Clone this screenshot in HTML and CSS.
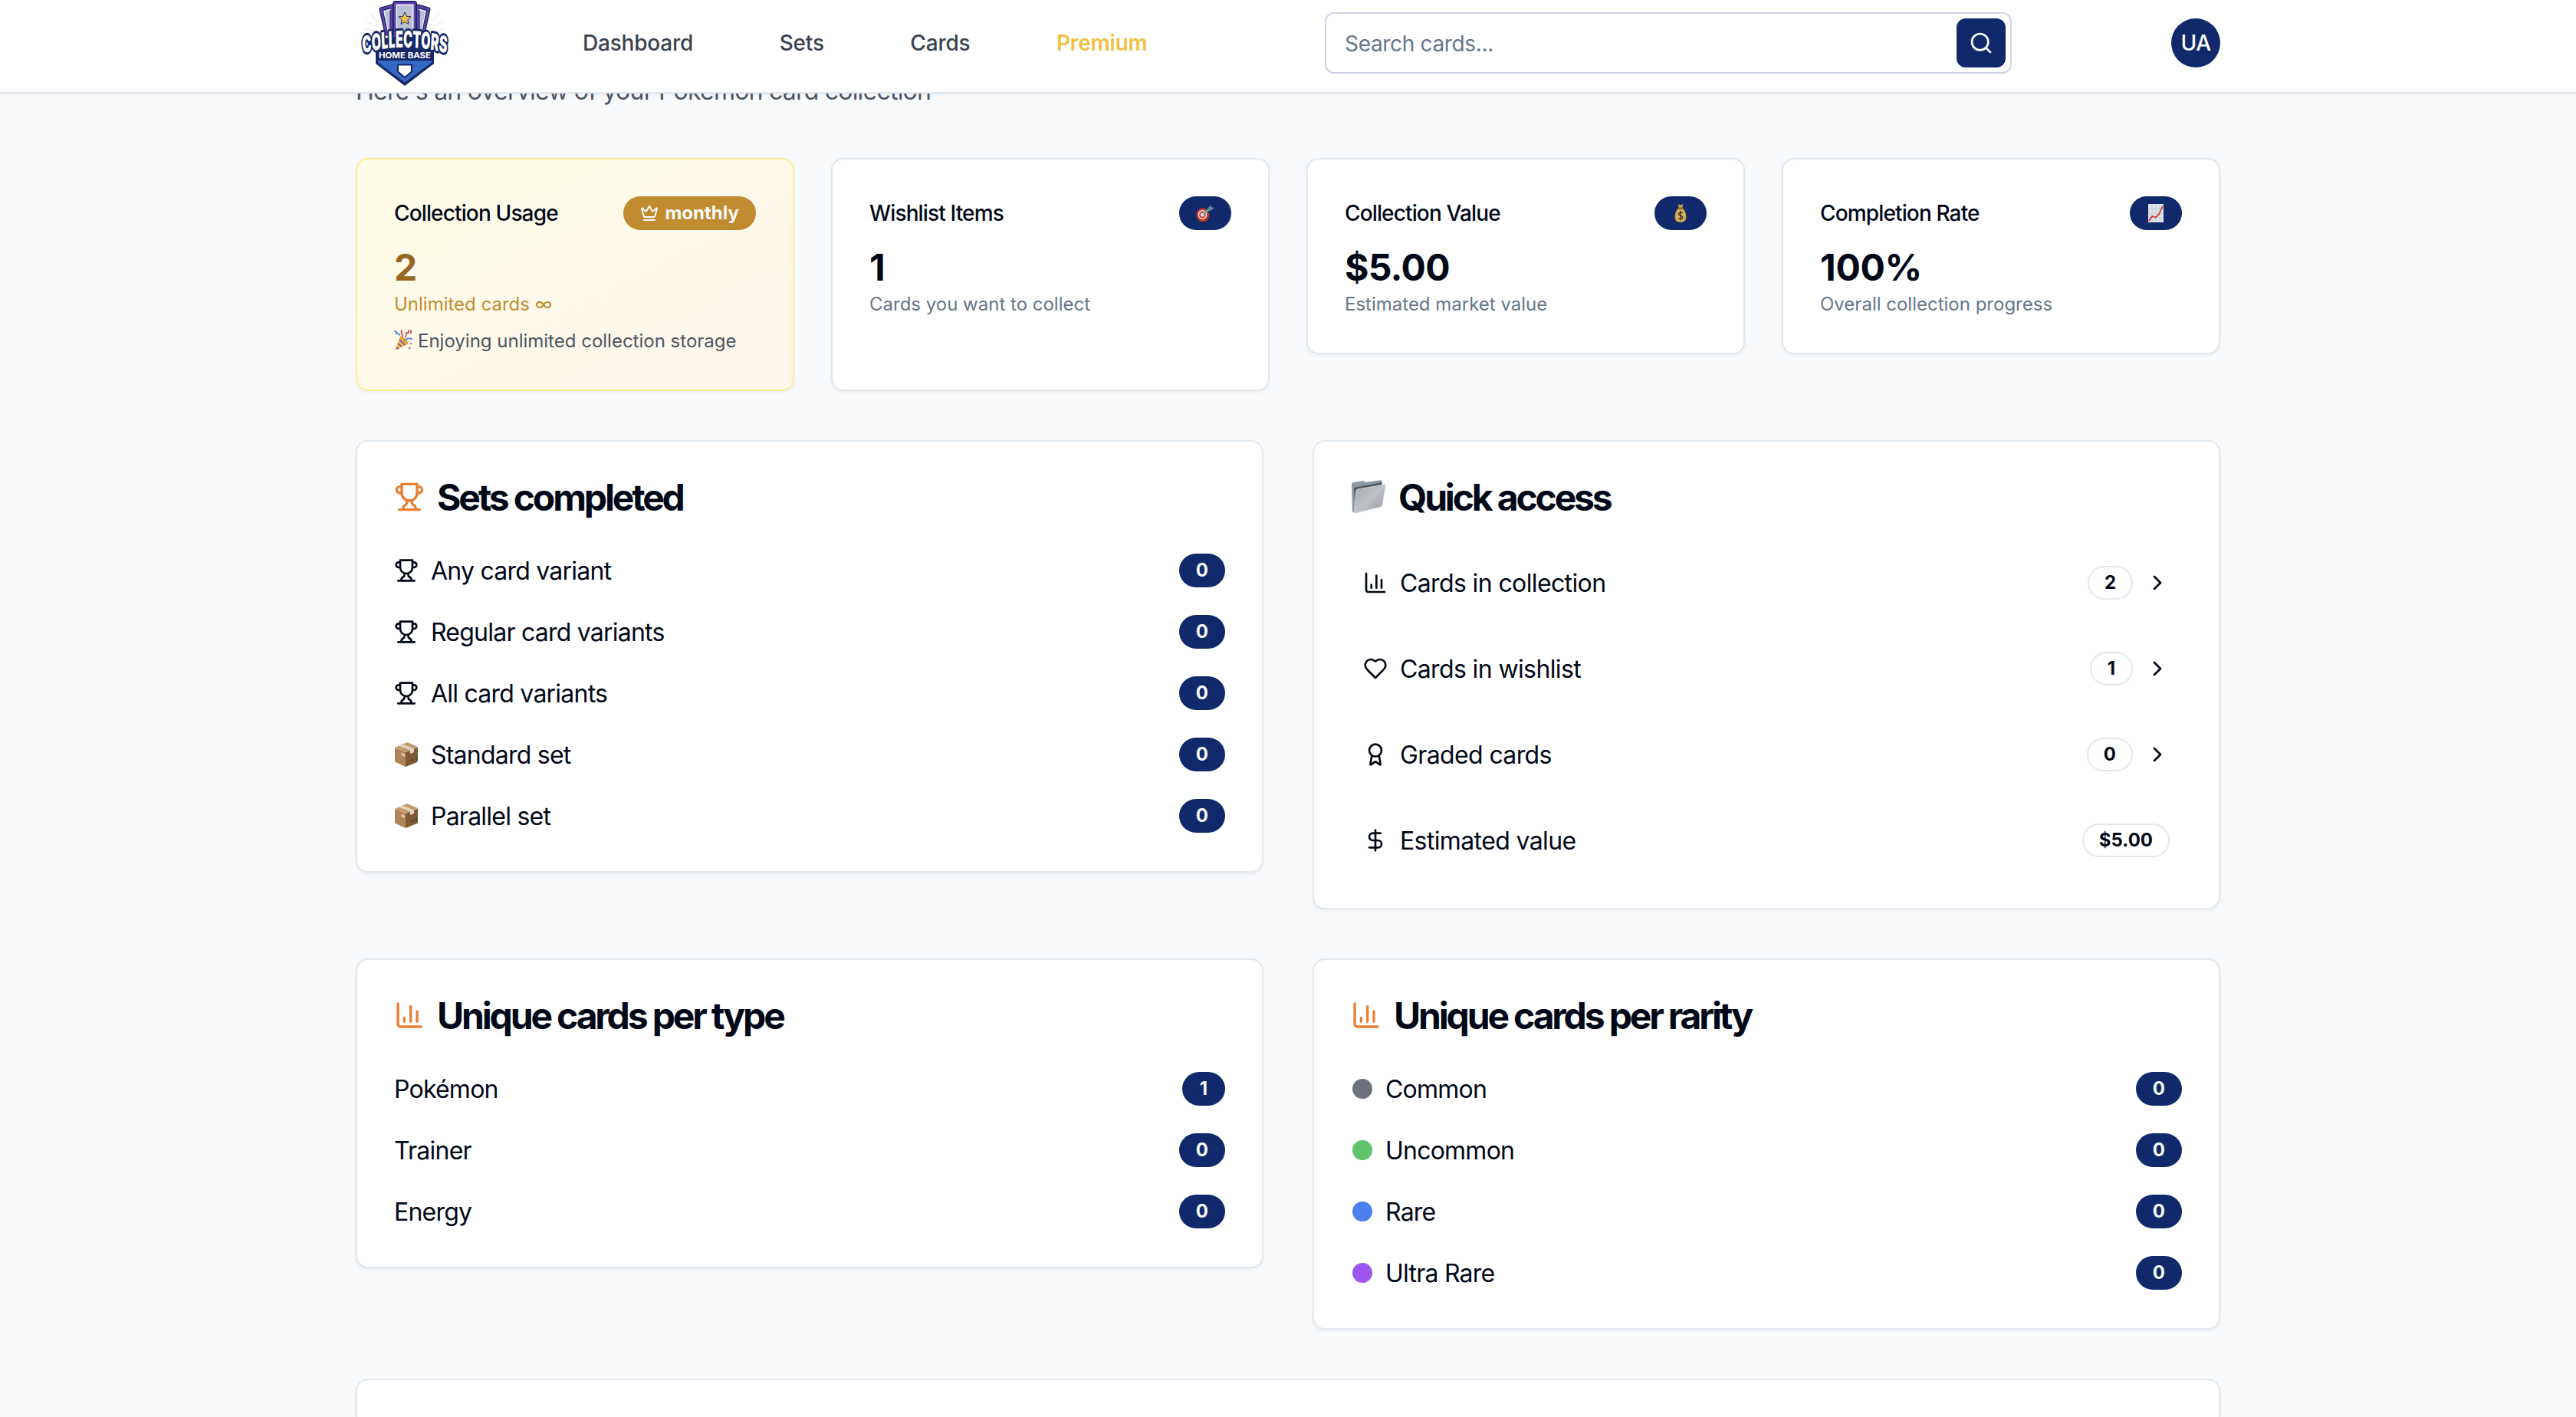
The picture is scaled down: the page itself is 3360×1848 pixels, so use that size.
FILE: index.html
```html
<!DOCTYPE html>
<html lang="en">
<head>
<meta charset="utf-8">
<title>Collectors Home Base</title>
<link rel="stylesheet" href="styles.css">
</head>
<body>
<svg class="sprite" aria-hidden="true">
  <symbol id="trophy" viewBox="0 0 24 24"><path d="M6 9H4.5a2.5 2.5 0 0 1 0-5H6M18 9h1.500a2.500 2.500 0 0 0 0-5H18M4 22h16M10 14.660V17c0 .55-.47.98-.97 1.210C7.850 18.750 7 20.240 7 22M14 14.660V17c0 .55.47.98.97 1.210C16.150 18.750 17 20.240 17 22M18 2H6v7a6 6 0 0 0 12 0V2Z"/></symbol>
  <symbol id="chart" viewBox="0 0 24 24"><path d="M3 3v16a2 2 0 0 0 2 2h16M18 17V9M13 17V5M8 17v-3"/></symbol>
  <symbol id="heart" viewBox="0 0 24 24"><path d="M19 14c1.490-1.460 3-3.210 3-5.500A5.500 5.500 0 0 0 16.500 3c-1.760 0-3 .5-4.500 2-1.500-1.500-2.740-2-4.500-2A5.500 5.500 0 0 0 2 8.500c0 2.300 1.500 4.050 3 5.500l7 7Z"/></symbol>
  <symbol id="award" viewBox="0 0 24 24"><path d="m15.477 12.890 1.515 8.526a.5.5 0 0 1-.81.47l-3.580-2.687a1 1 0 0 0-1.197 0l-3.586 2.686a.5.5 0 0 1-.81-.469l1.514-8.526"/><circle cx="12" cy="8" r="6"/></symbol>
  <symbol id="dollar" viewBox="0 0 24 24"><path d="M12 2v20M17 5H9.500a3.500 3.500 0 0 0 0 7h5a3.500 3.500 0 0 1 0 7H6"/></symbol>
  <symbol id="chevron" viewBox="0 0 24 24"><path d="m9 18 6-6-6-6"/></symbol>
  <symbol id="search" viewBox="0 0 24 24"><circle cx="11" cy="11" r="8"/><path d="m21 21-4.300-4.300"/></symbol>
  <symbol id="crown" viewBox="0 0 24 24"><path d="M11.562 3.266a.5.5 0 0 1 .876 0L15.390 8.870a1 1 0 0 0 1.516.294L21.183 5.500a.5.5 0 0 1 .798.519l-2.834 10.246a1 1 0 0 1-.956.734H5.810a1 1 0 0 1-.957-.734L2.020 6.020a.5.5 0 0 1 .798-.519l4.276 3.664a1 1 0 0 0 1.516-.294zM5 21h14"/></symbol>
  <symbol id="box" viewBox="0 0 32 32">
    <path fill="#b08458" d="M1 7 15 13V32L2 26Q1 25.500 1 24.500Z"/>
    <path fill="#7d5a35" d="M15 13 31 6.500V24Q31 25.500 30 26L15 32Z"/>
    <path fill="#c39a6d" d="M1 7 17 0 31 6 15 13Z"/>
    <path fill="#e3d3bd" d="M6.500 4.700 11.500 2.500 26 8.500V13l-5 2V10.600Z"/>
    <path fill="#d9cab6" d="m9 13.500 5 2.200v3.300l-4-2z"/>
    <path fill="#51391f" d="m22 22.500 4-1.700-2 4zM28 20l2-.8v3l-2 .8z"/>
  </symbol>
</svg>

<header class="topbar">
  <div class="topbar-inner">
    <svg class="logo" viewBox="0 0 128 112" role="img" aria-label="Collectors Home Base">
      <g stroke="#e6e7ea" stroke-width="1.200" stroke-linecap="round"><path d="m14 28 12 6M19 18l8 9M11 37l14 4M114 28l-12 6M109 18l-8 9M117 37l-14 4"/></g>
      <g stroke-linejoin="round">
        <path d="M33 12 47 8V44H40Z" fill="#b8bfd6" stroke="#18235f" stroke-width="5"/>
        <path d="M95 12 81 8V44H88Z" fill="#b8bfd6" stroke="#18235f" stroke-width="5"/>
        <path d="M33 12 47 8V44H40ZM95 12 81 8V44H88Z" fill="none" stroke="#6440ac" stroke-width="2.600"/>
        <path d="M37 15 46 12.500M42 40 37 15M91 15 82 12.500M86 40 91 15" fill="none" stroke="#f6f7fc" stroke-width="1"/>
        <rect x="50" y="3" width="28" height="45" rx="2" fill="#b8bfd6" stroke="#18235f" stroke-width="4"/>
        <rect x="51" y="4" width="26" height="44" fill="none" stroke="#6440ac" stroke-width="2.400"/>
        <rect x="53.500" y="7" width="21" height="40" fill="none" stroke="#f1f3fa" stroke-width="1"/>
      </g>
      <path d="m64 16 2.400 5.300 5.600.6-4.200 3.900 1.200 5.700-5-2.900-5 2.900 1.200-5.700-4.200-3.900 5.600-.6z" fill="#f4c04a" stroke="#293064" stroke-width="1"/>
      <path d="M26 52 64 46 102 52V83L64 112 26 83Z" fill="#152766"/>
      <path d="M29 79H99V81.500L64 107.500 29 81.500Z" fill="#3468c5"/>
      <path d="M55 84.500H73V93.500L64 101 55 93.500Z" fill="#fff" stroke="#152766" stroke-width="2"/>
      <g transform="scale(.54 1)">
        <path id="arch" d="M-7.500 74Q118.500 49.500 244.500 74" fill="none"/>
        <text class="logo-name" text-anchor="middle"><textPath href="#arch" startOffset="50%">COLLECTORS</textPath></text>
      </g>
      <text class="logo-sub" x="64" y="76" text-anchor="middle" textLength="68" lengthAdjust="spacingAndGlyphs">HOME BASE</text>
    </svg>
    <nav class="nav">
      <a>Dashboard</a><a>Sets</a><a>Cards</a><a class="premium">Premium</a>
    </nav>
    <div class="searchbox"><span class="placeholder">Search cards...</span><button class="search-btn" aria-label="Search"><svg class="icon"><use href="#search"/></svg></button></div>
    <div class="avatar">UA</div>
  </div>
</header>

<main class="page">
  <p class="intro">Here's an overview of your Pokémon card collection</p>

  <section class="stats">
    <article class="card stat usage">
      <div class="stat-head"><h3>Collection Usage</h3><span class="badge gold"><svg class="icon-sm"><use href="#crown"/></svg>monthly</span></div>
      <div class="stat-value">2</div>
      <p class="stat-note">Unlimited cards ∞</p>
      <p class="stat-extra"><svg class="party" viewBox="0 0 24 28"><path fill="#f2bd45" d="M1 27 8 9 18 19Z"/><path stroke="#9256b5" stroke-width="2" d="m5 18 5 4M7 13l7 7M3 23.500l3 1.500"/><ellipse cx="13" cy="13.500" rx="2.600" ry="7" transform="rotate(-45 13 13.500)" fill="#dca43a"/><g fill="none" stroke-width="2" stroke-linecap="round"><path stroke="#5a8ad8" d="M1 2q3 0 2 3 3-1 4 2M15 13q4-3 8-1"/><path stroke="#cf5964" d="M11 8q-2-4-1-7M16 7V4h3V1M22 1v3"/></g><g fill="#d45a73"><circle cx="22" cy="18" r="1.200"/><circle cx="20" cy="24" r="1.300"/><circle cx="15" cy="9" r="1.200"/></g></svg>Enjoying unlimited collection storage</p>
    </article>
    <article class="card stat">
      <div class="stat-head"><h3>Wishlist Items</h3><span class="badge"><svg class="emoji" viewBox="0 0 24 24"><ellipse cx="9" cy="15" rx="8.500" ry="9" fill="#8e2a22"/><ellipse cx="8.500" cy="14" rx="8" ry="8.500" fill="#c63a2e"/><ellipse cx="8.500" cy="14" rx="5.700" ry="6" fill="#f2e9e6"/><ellipse cx="8.500" cy="14" rx="4.300" ry="4.500" fill="#c63a2e"/><ellipse cx="8.500" cy="14" rx="2.500" ry="2.600" fill="#f2e9e6"/><path d="M9 14 19 5" stroke="#62aeb5" stroke-width="2.500"/><path d="m15 6 4-5 1 3 4 1-5 4-4 .5z" fill="#4f8f98"/></svg></span></div>
      <div class="stat-value">1</div>
      <p class="stat-note">Cards you want to collect</p>
    </article>
    <article class="card stat short">
      <div class="stat-head"><h3>Collection Value</h3><span class="badge"><svg class="emoji" viewBox="0 0 24 24"><path d="M9 0 12 1.500 15 0 14.500 5Q19 9 19.500 17 19.500 24 12 24 4.500 24 4.500 17 5 9 9.500 5Z" fill="#caa049"/><path d="M8.500 5.500h7" stroke="#7c5722" stroke-width="1.600"/><ellipse cx="12" cy="15.500" rx="5.500" ry="7" fill="#e0bd63"/><path d="M15 12q-3-2-5 0t2 3.200q4 1.200 2.500 3.500-2.500 2-5.500 0M12 9v12.500" fill="none" stroke="#3d3621" stroke-width="1.500"/></svg></span></div>
      <div class="stat-value">$5.00</div>
      <p class="stat-note">Estimated market value</p>
    </article>
    <article class="card stat short">
      <div class="stat-head"><h3>Completion Rate</h3><span class="badge"><svg class="emoji" viewBox="0 0 24 24"><path fill="#dfe4ea" d="M2 0H22V24H2Z"/><path stroke="#bcc7d2" stroke-width=".8" d="M2 6H22M2 12H22M2 18H22M7 0V24M12 0V24M17 0V24"/><path d="m3 22 4-6 5 1.500 4-4 5-11" fill="none" stroke="#c83b38" stroke-width="1.800"/></svg></span></div>
      <div class="stat-value wide">100%</div>
      <p class="stat-note">Overall collection progress</p>
    </article>
  </section>

  <section class="panels">
    <article class="card panel">
      <h2><svg class="icon-lg"><use href="#trophy"/></svg><span>Sets completed</span></h2>
      <ul class="rows">
        <li><svg class="icon"><use href="#trophy"/></svg><span class="label">Any card variant</span><span class="badge">0</span></li>
        <li><svg class="icon"><use href="#trophy"/></svg><span class="label">Regular card variants</span><span class="badge">0</span></li>
        <li><svg class="icon"><use href="#trophy"/></svg><span class="label">All card variants</span><span class="badge">0</span></li>
        <li><svg class="package"><use href="#box"/></svg><span class="label">Standard set</span><span class="badge">0</span></li>
        <li><svg class="package"><use href="#box"/></svg><span class="label">Parallel set</span><span class="badge">0</span></li>
      </ul>
    </article>
    <article class="card panel">
      <h2><svg class="folder" viewBox="0 0 46 44"><defs><linearGradient id="fold" x1="0" y1="0" x2="1" y2="1"><stop offset="0" stop-color="#a3a9ae"/><stop offset=".5" stop-color="#bfc2c7"/><stop offset="1" stop-color="#91959b"/></linearGradient></defs><path fill="#8d979f" d="M1 5 3 3 16 1 19 3 40 0V6L5 43 2 41Z"/><path fill="#4f5961" d="m4 10 37-7-1 4L6 40Z"/><path fill="url(#fold)" stroke="#d6d9dc" stroke-width="1" d="M9 12 44.500 6Q45.500 6 45 8L41 32Q41 34 39 35L6 43Q4 43 4.500 41L7 14Q7.500 12.300 9 12Z"/></svg><span>Quick access</span></h2>
      <ul class="links">
        <li><svg class="icon"><use href="#chart"/></svg><span class="label">Cards in collection</span><span class="badge outline">2</span><svg class="icon"><use href="#chevron"/></svg></li>
        <li><svg class="icon"><use href="#heart"/></svg><span class="label">Cards in wishlist</span><span class="badge outline">1</span><svg class="icon"><use href="#chevron"/></svg></li>
        <li><svg class="icon"><use href="#award"/></svg><span class="label">Graded cards</span><span class="badge outline">0</span><svg class="icon"><use href="#chevron"/></svg></li>
        <li><svg class="icon"><use href="#dollar"/></svg><span class="label">Estimated value</span><span class="badge outline">$5.00</span></li>
      </ul>
    </article>
    <article class="card panel">
      <h2><svg class="icon-lg"><use href="#chart"/></svg><span>Unique cards per type</span></h2>
      <ul class="rows">
        <li><span class="label">Pokémon</span><span class="badge">1</span></li>
        <li><span class="label">Trainer</span><span class="badge">0</span></li>
        <li><span class="label">Energy</span><span class="badge">0</span></li>
      </ul>
    </article>
    <article class="card panel">
      <h2><svg class="icon-lg"><use href="#chart"/></svg><span>Unique cards per rarity</span></h2>
      <ul class="rows">
        <li><i class="dot common"></i><span class="label">Common</span><span class="badge">0</span></li>
        <li><i class="dot uncommon"></i><span class="label">Uncommon</span><span class="badge">0</span></li>
        <li><i class="dot rare"></i><span class="label">Rare</span><span class="badge">0</span></li>
        <li><i class="dot ultra"></i><span class="label">Ultra Rare</span><span class="badge">0</span></li>
      </ul>
    </article>
  </section>

  <section class="card next-panel"></section>
</main>
</body>
</html>
```

FILE: styles.css
```css
* { box-sizing: border-box; margin: 0; padding: 0; }

body {
  height: 1848px;
  overflow: hidden;
  background: #f9fafc;
  color: #020817;
  font: 400 32px/48px Inter, "Liberation Sans", sans-serif;
}

ul { list-style: none; }
.sprite { position: absolute; width: 0; height: 0; }

svg { display: block; flex: none; }
.icon, .icon-lg, .icon-sm {
  fill: none;
  stroke: currentColor;
  stroke-width: 2;
  stroke-linecap: round;
  stroke-linejoin: round;
}
.icon { width: 32px; height: 32px; }
.icon-lg { width: 40px; height: 40px; color: #e97e35; }
.icon-sm { width: 24px; height: 24px; }

/* Top bar */
.topbar {
  position: relative;
  z-index: 2;
  height: 122px;
  background: #fff;
  border-bottom: 2px solid #e2e8f0;
  box-shadow: 0 2px 4px rgba(0, 0, 0, .05);
}
.topbar-inner {
  display: flex;
  align-items: center;
  width: 2432px;
  height: 112px;
  margin: 0 auto;
}
.logo { width: 128px; height: 112px; overflow: visible; }
.logo-name {
  font: 900 30px Inter, sans-serif;
  fill: #fff;
  stroke: #152766;
  stroke-width: 6px;
  stroke-linejoin: round;
  paint-order: stroke;
}
.logo-sub { font: 700 11px Inter, sans-serif; fill: #fff; }
.nav {
  display: flex;
  gap: 112.5px;
  width: 968px;
  margin-left: 168px;
  font-size: 28px;
  font-weight: 500;
  line-height: 40px;
  letter-spacing: -.2px;
  color: #3a4250;
}
.nav .premium { color: #f2bf42; font-weight: 600; }
.searchbox {
  display: flex;
  align-items: center;
  justify-content: space-between;
  width: 896px;
  height: 80px;
  padding: 0 6px 0 24px;
  border: 2px solid #cfd5e6;
  border-radius: 12px;
  font-size: 28px;
}
.placeholder { padding-top: 2px; letter-spacing: -.33px; color: #67758b; }
.search-btn {
  display: grid;
  place-items: center;
  width: 64px;
  height: 64px;
  border: 0;
  border-radius: 12px;
  background: #10296b;
  color: #fff;
}
.avatar {
  display: grid;
  place-items: center;
  width: 64px;
  height: 64px;
  margin-left: auto;
  border-radius: 50%;
  background: #10296b;
  color: #fff;
  font-size: 28px;
  font-weight: 500;
  letter-spacing: -.5px;
}

/* Page */
.page { width: 2432px; margin: -28px auto 0; }
.intro { height: 48px; line-height: 50px; letter-spacing: -.78px; color: #4d5562; }

.card {
  background: #fff;
  border: 2px solid #e2e8ef;
  border-radius: 16px;
  box-shadow: 0 2px 4px rgba(0, 0, 0, .05);
}

.stats {
  display: grid;
  grid-template-columns: repeat(4, 1fr);
  gap: 48px;
  margin-top: 64px;
}
.stat { padding: 48px; }
.stat.short { align-self: start; }
.usage {
  background: linear-gradient(to bottom right, #fefde8, #fff6ed);
  border-color: #fcef93;
}
.stat-head {
  display: flex;
  align-items: center;
  justify-content: space-between;
  margin-bottom: 16px;
}
.stat-head h3 {
  font-size: 28px;
  line-height: 40px;
  font-weight: 500;
  letter-spacing: -.86px;
}
.stat-value {
  height: 64px;
  font-size: 48px;
  line-height: 66px;
  font-weight: 700;
  letter-spacing: -.7px;
}
.stat-value.wide { letter-spacing: -.3px; }
.stat-note { height: 32px; font-size: 24px; line-height: 34px; color: #67758b; }
.usage .stat-value { color: #986623; }
.usage .stat-note { color: #c18c30; }
.stat-extra {
  display: flex;
  gap: 7px;
  height: 32px;
  margin-top: 16px;
  font-size: 24px;
  line-height: 34px;
  color: #4d5562;
}
.party { width: 24px; height: 28px; margin-top: 2px; }

.badge {
  display: flex;
  align-items: center;
  justify-content: center;
  gap: 8px;
  min-width: 56px;
  height: 44px;
  padding: 0 22px;
  border-radius: 22px;
  background: #10296b;
  color: #f8fafc;
  font-size: 24px;
  line-height: 32px;
  font-weight: 650;
}
.badge.gold { background: #c18c30; }
.badge.outline {
  padding: 0 20px;
  border: 2px solid #e2e8f0;
  background: #fff;
  color: #020817;
}
.emoji { width: 24px; height: 24px; }

.panels {
  display: grid;
  grid-template-columns: 1fr 1fr;
  align-items: start;
  gap: 64px;
  margin-top: 64px;
}
.panel { padding: 48px; }
.panel h2 {
  display: flex;
  align-items: center;
  gap: 16px;
  height: 48px;
  margin-bottom: 48px;
  font-size: 48px;
  line-height: 48px;
  font-weight: 650;
  letter-spacing: -3.15px;
}
.panel h2 span, .label { padding-top: 2px; }
.folder { width: 46px; height: 50px; }
.rows, .links { display: grid; gap: 32px; }
.rows li, .links li { display: flex; align-items: center; gap: 16px; height: 48px; }
.rows { letter-spacing: -.77px; }
.links { letter-spacing: -.62px; }
.rows .badge, .links .badge { letter-spacing: 0; }
.links li { height: 80px; padding: 0 16px; }
.label { margin-right: auto; }
.package { width: 32px; height: 32px; }

.dot { width: 26px; height: 26px; margin: 0 1px 0 2px; border-radius: 50%; }
.common { background: #6e727f; }
.uncommon { background: #60c36b; }
.rare { background: #4b80ee; }
.ultra { background: #9d57ee; }

.next-panel {
  height: 50px;
  margin-top: 64px;
  border-bottom: 0;
  border-radius: 16px 16px 0 0;
}
```
